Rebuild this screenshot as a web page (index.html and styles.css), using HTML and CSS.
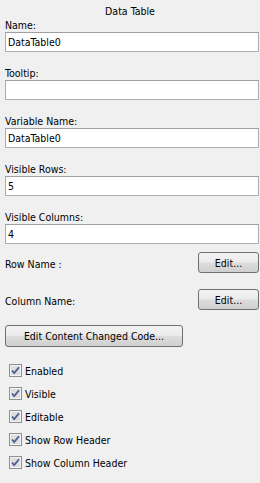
FILE: index.html
```html
<!DOCTYPE html>
<html>
<head>
  <title>Data Table Properties</title>
  <link rel="stylesheet" href="styles.css">
</head>
<body>
  <div class="panel">
    <div class="title">Data Table</div>

    <div class="field">
      <div class="label">Name:</div>
      <input class="text-input" type="text" value="DataTable0">
    </div>
    <div class="field">
      <div class="label">Tooltip:</div>
      <input class="text-input" type="text" value="">
    </div>
    <div class="field">
      <div class="label">Variable Name:</div>
      <input class="text-input" type="text" value="DataTable0">
    </div>
    <div class="field">
      <div class="label">Visible Rows:</div>
      <input class="text-input" type="text" value="5">
    </div>
    <div class="field">
      <div class="label">Visible Columns:</div>
      <input class="text-input" type="text" value="4">
    </div>

    <div class="edit-row first-row">
      <span class="row-label">Row Name :</span>
      <button class="btn edit-btn">Edit...</button>
    </div>
    <div class="edit-row">
      <span class="row-label">Column Name:</span>
      <button class="btn edit-btn">Edit...</button>
    </div>

    <button class="btn code-btn">Edit Content Changed Code...</button>

    <div class="checks">
      <label class="check"><span class="box"></span>Enabled</label>
      <label class="check"><span class="box"></span>Visible</label>
      <label class="check"><span class="box"></span>Editable</label>
      <label class="check"><span class="box"></span>Show Row Header</label>
      <label class="check"><span class="box"></span>Show Column Header</label>
    </div>
  </div>

  <script>
    // draw the check mark into every box
    var boxes = document.querySelectorAll('.box');
    for (var i = 0; i < boxes.length; i++) {
      boxes[i].innerHTML =
        '<svg width="13" height="13" viewBox="0 0 13 13">' +
        '<rect x="0.5" y="0.5" width="12" height="12" fill="#f4f4f4" stroke="#8f8f8f"/>' +
        '<rect x="1.5" y="1.5" width="10" height="10" fill="#dedede" stroke="#f4f4f4"/>' +
        '<path d="M3 6.5 L5.2 9 L10 3.2" fill="none" stroke="#4b5e93" stroke-width="1.8"/>' +
        '</svg>';
    }
  </script>
</body>
</html>
```

FILE: styles.css
```css
body {
  margin: 0;
  background-color: #f0f0f0;
  font-family: "DejaVu Sans Condensed", "Liberation Sans", sans-serif;
  font-size: 10.5px;
  color: #000;
}

.panel {
  width: 260px;
  height: 483px;
  box-sizing: border-box;
  padding: 4px 1px 0 5px;
}

.title {
  text-align: center;
  line-height: 14px;
  height: 14px;
  margin-right: -1px;
  margin-left: -5px;
}

.field {
  margin-bottom: 14px;
}

.label {
  line-height: 14px;
  height: 14px;
}

.text-input {
  display: block;
  box-sizing: border-box;
  width: 100%;
  height: 20px;
  margin: 0;
  padding: 0 2px;
  border: 1px solid #abadb3;
  border-top-color: #a0a0a0;
  background: #fff;
  font-family: inherit;
  font-size: 10.5px;
  color: #000;
  outline: none;
}

.edit-row {
  display: flex;
  align-items: center;
  justify-content: space-between;
  margin-top: 16px;
}

.first-row {
  margin-top: -6px;
}

.row-label {
  padding-top: 3px;
}

.btn {
  box-sizing: border-box;
  border: 1px solid #707070;
  border-radius: 3px;
  background: linear-gradient(#f3f3f3 0%, #ebebeb 48%, #dddddd 52%, #cfcfcf 100%);
  font-family: inherit;
  font-size: 10.5px;
  color: #000;
  padding: 0;
  margin: 0;
}

.edit-btn {
  width: 61px;
  height: 21px;
  margin-right: 0;
}

.code-btn {
  display: block;
  width: 178px;
  height: 22px;
  margin-top: 15px;
}

.checks {
  margin-top: 12px;
  padding-left: 4px;
}

.check {
  display: flex;
  align-items: center;
  height: 23px;
}

.box {
  width: 13px;
  height: 13px;
  margin-right: 3px;
  display: block;
}

.box svg {
  display: block;
}
```
